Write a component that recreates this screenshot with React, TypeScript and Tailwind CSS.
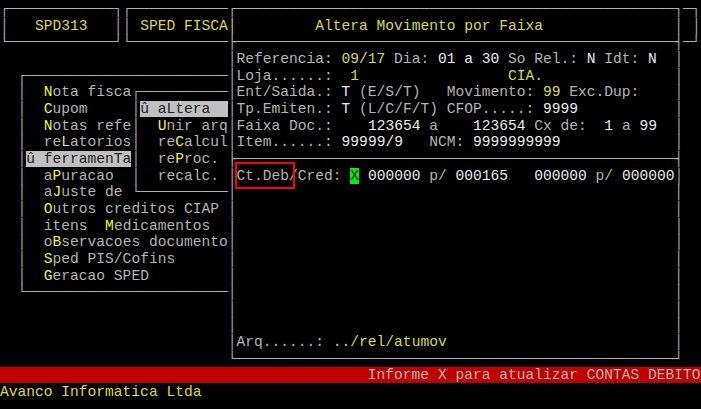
import React from "react";

type Fg = "g" | "w" | "y" | "h" | "k" | "b";
type Bg = "n" | "r" | "s" | "x";
type Cell = { ch: string; fg: Fg; bg: Bg };

const COLS = 80;
const ROWS = 24;

// full class names per colour code
const fgClass: Record<Fg, string> = {
  g: "text-[#b4b4b4]",
  w: "text-[#ececec]",
  y: "text-[#dada44]",
  h: "text-[#f4f430]",
  k: "text-[#202020]",
  b: "text-[#b0b0b0]",
};
const bgClass: Record<Bg, string> = {
  n: "",
  r: "bg-[#c00000]",
  s: "bg-[#c0c0c0]",
  x: "bg-[#00f000]",
};

function buildScreen() {
  const s: Cell[][] = Array.from({ length: ROWS }, () =>
    Array.from({ length: COLS }, () => ({ ch: " ", fg: "g" as Fg, bg: "n" as Bg }))
  );

  const put = (r: number, c: number, text: string, fg: Fg = "g", bg: Bg = "n") => {
    [...text].forEach((ch, i) => {
      if (c + i < COLS) s[r][c + i] = { ch, fg, bg };
    });
  };

  const seg = (r: number, c: number, parts: [string, Fg, Bg?][]) => {
    let col = c;
    for (const [t, fg, bg] of parts) {
      put(r, col, t, fg, bg ?? "n");
      col += t.length;
    }
  };

  const box = (r1: number, c1: number, r2: number, c2: number) => {
    for (let r = r1; r <= r2; r++) {
      for (let c = c1; c <= c2 && c < COLS; c++) {
        let ch = " ";
        const top = r === r1, bot = r === r2, left = c === c1, right = c === c2;
        if (top && left) ch = "┌";
        else if (top && right) ch = "┐";
        else if (bot && left) ch = "└";
        else if (bot && right) ch = "┘";
        else if (top || bot) ch = "─";
        else if (left || right) ch = "│";
        s[r][c] = { ch, fg: "b", bg: "n" };
      }
    }
  };

  const sep = (r: number, c1: number, c2: number) => {
    for (let c = c1; c <= c2; c++) {
      s[r][c] = { ch: c === c1 ? "├" : c === c2 ? "┤" : "─", fg: "b", bg: "n" };
    }
  };

  // header boxes
  box(0, 0, 2, 13);
  put(1, 4, "SPD313", "y");
  box(0, 14, 2, 79);
  put(1, 16, "SPED FISCAL", "y");

  // main menu
  box(4, 2, 17, 30);
  const menu: [number, string, number][] = [
    [5, "Nota fiscal", 0],
    [6, "Cupom", 0],
    [7, "Notas referenciadas", 0],
    [8, "reLatorios", 2],
    [10, "aPuracao", 1],
    [11, "aJuste de", 1],
    [12, "Outros creditos CIAP", 0],
    [13, "itens  Medicamentos", 7],
    [14, "oBservacoes documento", 1],
    [15, "Sped PIS/Cofins", 0],
    [16, "Geracao SPED", 0],
  ];
  menu.forEach(([r, t, k]) => {
    put(r, 5, t, "g");
    put(r, 5 + k, t[k], "h");
  });
  put(9, 3, "û ferramenTa", "k", "s");

  // sub menu
  box(5, 15, 11, 30);
  put(6, 16, "û aLtera        ", "k", "s");
  const sub: [number, string, number][] = [
    [7, "Unir arq", 0],
    [8, "reCalcul", 2],
    [9, "reProc.", 2],
    [10, "recalc.", -1],
  ];
  sub.forEach(([r, t, k]) => {
    put(r, 18, t, "g");
    if (k >= 0) put(r, 18 + k, t[k], "h");
  });

  // dialog
  box(0, 26, 21, 77);
  s[1][26] = { ch: "│", fg: "y", bg: "n" };
  put(1, 36, "Altera Movimento por Faixa", "y");
  sep(2, 26, 77);
  seg(3, 27, [
    ["Referencia: ", "g"], ["09/17", "y"], [" Dia: ", "g"], ["01 a 30", "w"],
    [" So Rel.: ", "g"], ["N", "w"], [" Idt: ", "g"], ["N", "w"],
  ]);
  seg(4, 27, [["Loja......:  ", "g"], ["1", "y"]]);
  put(4, 58, "CIA.", "y");
  seg(5, 27, [
    ["Ent/Saida.: ", "g"], ["T", "w"], [" (E/S/T)   Movimento: ", "g"], ["99", "y"], [" Exc.Dup:", "g"],
  ]);
  seg(6, 27, [["Tp.Emiten.: ", "g"], ["T", "w"], [" (L/C/F/T) CFOP.....: ", "g"], ["9999", "w"]]);
  seg(7, 27, [
    ["Faixa Doc.: ", "g"], ["   123654", "w"], [" a ", "g"], ["   123654", "w"],
    [" Cx de: ", "g"], [" 1", "w"], [" a ", "g"], ["99", "w"],
  ]);
  seg(8, 27, [["Item......: ", "g"], ["99999/9", "w"], ["   NCM: ", "g"], ["9999999999", "w"]]);
  sep(9, 26, 77);
  seg(10, 27, [
    ["Ct.Deb/Cred: ", "g"], ["X", "k", "x"], [" ", "g"], ["000000", "w"], [" p/ ", "g"],
    ["000165", "w"], ["   ", "g"], ["000000", "w"], [" p/ ", "g"], ["000000", "w"],
  ]);
  seg(20, 27, [["Arq......: ", "g"], ["../rel/atumov", "y"]]);

  // status bar
  put(22, 0, " ".repeat(COLS), "g", "r");
  put(22, 42, "Informe X para atualizar CONTAS DEBITO", "g", "r");
  put(23, 0, "Avanco Informatica Ltda", "y");

  return s;
}

function Row({ cells }: { cells: Cell[] }) {
  const runs: { text: string; cls: string }[] = [];
  for (const c of cells) {
    const cls = `${fgClass[c.fg]} ${bgClass[c.bg]}`;
    const last = runs[runs.length - 1];
    if (last && last.cls === cls) last.text += c.ch;
    else runs.push({ text: c.ch, cls });
  }
  return (
    <div className="h-[16.67px] leading-[16.67px] whitespace-pre">
      {runs.map((r, i) => (
        <span key={i} className={r.cls}>
          {r.text}
        </span>
      ))}
    </div>
  );
}

export default function App() {
  const screen = buildScreen();
  return (
    <div className="relative w-[701px] h-[409px] overflow-hidden bg-black pt-px font-['Liberation_Mono','DejaVu_Sans_Mono',monospace] text-[14.6px]">
      {screen.map((cells, i) => (
        <Row key={i} cells={cells} />
      ))}
      {/* annotation frame */}
      <div className="absolute left-[235px] top-[162px] w-[60px] h-[27px] border-2 border-[#ff0000]" />
    </div>
  );
}
